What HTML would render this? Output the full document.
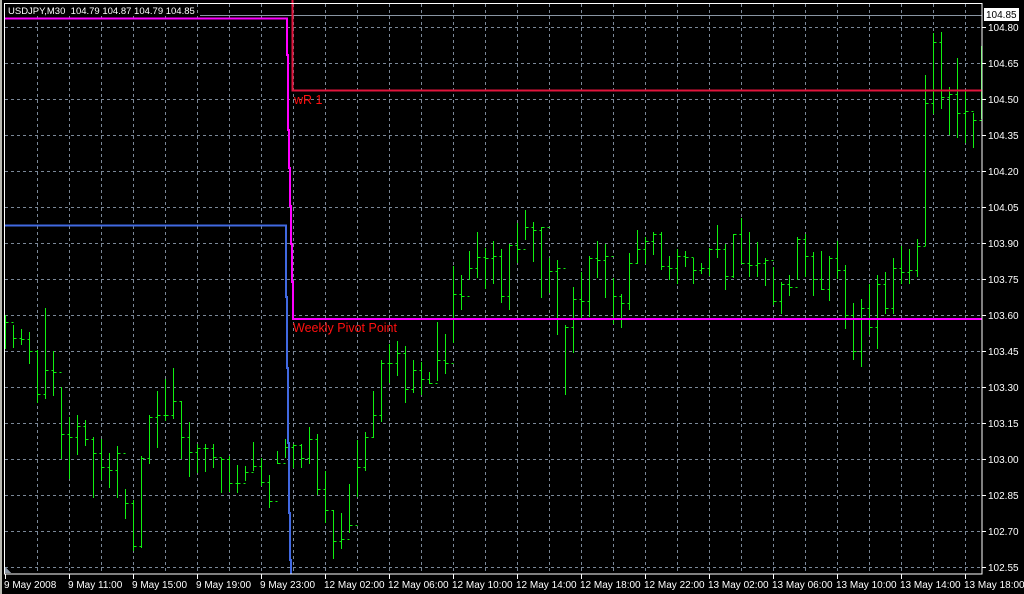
<!DOCTYPE html>
<html><head><meta charset="utf-8"><style>
html,body{margin:0;padding:0;background:#000;width:1024px;height:594px;overflow:hidden}
svg{display:block}
text{font-family:"Liberation Sans",sans-serif;font-size:10px}
</style></head><body>
<svg id="c" width="1024" height="594" xmlns="http://www.w3.org/2000/svg" shape-rendering="crispEdges">
<rect width="1024" height="594" fill="#000"/>
<rect x="0" y="0" width="2" height="594" fill="#b8b8b0"/>
<g id="grid" stroke="#7b8898" stroke-width="1" stroke-dasharray="3,3"></g>
<line x1="200" y1="15.5" x2="982" y2="15.5" stroke="#8a96a4"/>
<g id="bars" stroke="#10f010" stroke-width="1"></g>
<polyline points="292.5,0 292.5,90.5 982,90.5" fill="none" stroke="#e0143c" stroke-width="2"/>
<polyline points="5,18.5 287,18.5 287,55 288,55 288,130 289,130 289,168 290,168 290,206 291,206 291,244 292,244 292,282 293,282 293,319 982,319" fill="none" stroke="#ff00ff" stroke-width="2"/>
<polyline points="5,225.5 286,225.5 286,297 287,297 287,368 288,368 288,443 289,443 289,513 290,513 290,560 291,560 291,574" fill="none" stroke="#4169e1" stroke-width="2"/>
<text x="294" y="104" fill="#ff1010" style="font-size:12.5px">wR 1</text>
<text x="293" y="332" fill="#ff1010" style="font-size:12.5px">Weekly Pivot Point</text>
<rect x="4.5" y="3.5" width="977.5" height="570.5" fill="none" stroke="#fff" stroke-width="1"/>
<rect x="0" y="4" width="4" height="570" fill="#000"/>
<rect x="0" y="0" width="2" height="594" fill="#b8b8b0"/>
<rect x="5" y="4" width="192" height="12" fill="#000"/>
<text x="8" y="14" fill="#fff" style="font-size:9.5px" xml:space="preserve">USDJPY,M30  104.79 104.87 104.79 104.85</text>
<polygon points="5,567 5,573 11,573" fill="#8a96a4"/>
<g id="axis"></g>
<rect x="984" y="8" width="35" height="13" fill="#fff"/>
<text x="986" y="18" fill="#000">104.85</text>
</svg>
<script>
var NS="http://www.w3.org/2000/svg";
function el(p,t,a,txt){var e=document.createElementNS(NS,t);for(var k in a)e.setAttribute(k,a[k]);if(txt)e.textContent=txt;p.appendChild(e);return e;}
var g=document.getElementById('grid');
for(var x=37;x<982;x+=32)el(g,'line',{x1:x+.5,y1:4,x2:x+.5,y2:574});
for(var y=27;y<574;y+=36)el(g,'line',{x1:5,y1:y+.5,x2:982,y2:y+.5});
var ax=document.getElementById('axis');
var prices=["104.80","104.65","104.50","104.35","104.20","104.05","103.90","103.75","103.60","103.45","103.30","103.15","103.00","102.85","102.70","102.55"];
for(var i=0;i<prices.length;i++){var yy=27+36*i;el(ax,'line',{x1:982,y1:yy+.5,x2:986,y2:yy+.5,stroke:'#fff'});el(ax,'text',{x:988,y:yy+4,fill:'#fff'},prices[i]);}
var tl=["9 May 2008","9 May 11:00","9 May 15:00","9 May 19:00","9 May 23:00","12 May 02:00","12 May 06:00","12 May 10:00","12 May 14:00","12 May 18:00","12 May 22:00","13 May 02:00","13 May 06:00","13 May 10:00","13 May 14:00","13 May 18:00"];
for(var i=0;i<tl.length;i++){var xx=5+64*i;el(ax,'line',{x1:xx+.5,y1:574,x2:xx+.5,y2:579,stroke:'#fff'});el(ax,'text',{x:xx-1,y:588,fill:'#fff'},tl[i]);}
var B=[[5,315,348,322],[13,325,347,338],[21,329,344,339],[29,332,363,351],[37,350,402,394],[45,308,398,370],[53,351,395,372],[61,387,458,434],[69,417,478,437],[77,415,454,426],[85,420,445,439],[93,437,497,453],[101,439,479,467],[109,453,487,470],[117,446,497,453],[125,489,518,503],[133,500,550,546],[141,456,547,458],[149,415,463,417],[157,391,447,415],[165,379,420,415],[173,368,418,401],[181,401,458,437],[189,422,476,452],[197,444,472,448],[205,444,471,448],[213,444,467,457],[221,458,492,459],[229,456,491,483],[237,465,492,483],[245,466,480,472],[253,442,470,466],[261,458,485,482],[269,475,507,501],[277,451,463,463],[285,439,457,447],[293,444,467,445],[301,444,467,458],[309,427,463,439],[317,434,494,489],[325,471,522,510],
[333,510,558,541],[341,513,548,539],[349,484,532,525],[357,440,496,467],[365,432,470,437],[373,391,437,415],[381,360,421,363],[389,344,382,363],[397,341,375,353],[405,346,402,389],[413,360,392,370],[421,362,394,379],[429,372,383,383],[437,322,380,360],[445,334,373,363],[453,266,342,294],[461,275,309,296],[469,251,279,268],[477,232,277,257],[485,248,288,258],[493,241,283,256],[501,249,302,296],[509,244,309,245],[517,223,262,249],[525,210,239,227],[533,222,261,230],[541,227,297,227],[549,258,292,271],[557,260,334,268],[565,325,394,327],[573,287,352,299],[581,272,318,301],[589,256,316,258],[597,241,277,260],[605,244,297,256],[613,278,323,296],[621,294,327,303],[629,253,309,263],[637,230,263,249],
[645,237,263,241],[653,232,254,234],[661,232,269,266],[669,256,279,268],[677,249,283,256],[685,251,266,257],[693,258,283,270],[701,263,273,268],[709,248,275,249],[717,225,257,249],[725,244,289,276],[733,234,277,234],[741,218,263,263],[749,232,276,265],[757,242,276,263],[765,258,285,260],[773,267,304,301],[781,282,313,284],[789,275,295,287],[797,237,279,239],[805,234,276,256],[813,252,295,279],[821,251,289,289],[829,256,300,258],[837,241,278,270],[845,265,328,315],[853,303,359,351],[861,299,366,308],[869,284,334,327],[877,275,348,284],[885,272,313,308],[893,258,313,268],[901,246,283,272],[909,249,283,270],[917,239,276,246],[925,75,245,103],[933,33,113,42],[941,32,108,97],[949,87,134,94],[957,58,137,113],[965,90,142,111],[973,113,147,120],[981,46,118,118]];
var bg=document.getElementById('bars');var prev=B[0][3];
for(var i=0;i<B.length;i++){var b=B[i],x=b[0]+.5;
el(bg,'line',{x1:x,y1:b[1],x2:x,y2:b[2]+1});
el(bg,'line',{x1:x-2,y1:prev+.5,x2:x,y2:prev+.5});
if(b[0]<981)el(bg,'line',{x1:x,y1:b[3]+.5,x2:x+3,y2:b[3]+.5});
prev=b[3];}
</script>
</body></html>
